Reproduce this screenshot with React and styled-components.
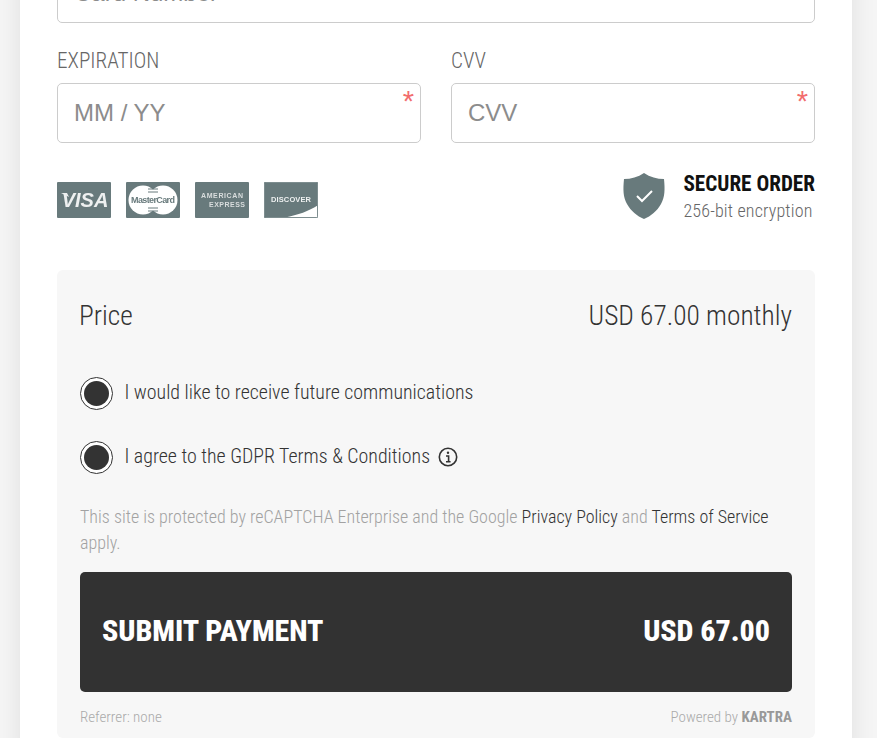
import React from "react";
import styled, { createGlobalStyle } from "styled-components";

const Global = createGlobalStyle`
  html, body { margin: 0; padding: 0; background: #f5f5f5; height: 738px; overflow: hidden; }
  * { box-sizing: border-box; }
`;
const Page = styled.div`
  width: 877px; height: 738px; overflow: hidden; padding: 0 25px 0 20px;
  font-family: Roboto, sans-serif; font-stretch: 75%;
`;
const Card = styled.main`
  width: 832px; height: 800px; background: #fff; padding: 0 37px;
  box-shadow: 0 0 24px rgba(0,0,0,.09);
`;
const TopInput = styled.div`
  height: 60px; margin-top: -37px; border: 1px solid #ccc; border-radius: 5px; padding: 0 16px;
  display: flex; align-items: center; color: #8c8c8c; font: 24px "Liberation Sans", sans-serif;
`;
const FieldRow = styled.div`
  display: grid; grid-template-columns: 364px 364px; column-gap: 30px; margin-top: 24px;
`;
const Label = styled.div`
  color: #666; font-size: 21.2px; font-weight: 350; line-height: 28px; height: 36px;
`;
const InputBox = styled.div`
  position: relative; height: 60px; border: 1px solid #ccc; border-radius: 5px; padding: 0 16px;
  display: flex; align-items: center; color: #8c8c8c; font: 24px "Liberation Sans", sans-serif;
`;
const Star = styled.span`
  position: absolute; right: 6px; top: 0; color: #f26d6d; font: 29px/34px "Liberation Sans", sans-serif;
`;
const TrustRow = styled.div`
  display: flex; justify-content: space-between; align-items: flex-start; margin-top: 39px; height: 88px;
`;
const Cards = styled.div`
  display: flex; gap: 15px;
`;
const PayCard = styled.svg`
  display: block; width: 54px; height: 36px; filter: blur(0.45px);
`;
const Secure = styled.div`
  display: flex; margin-top: -11px;
`;
const ShieldIcon = styled.svg`
  display: block; width: 42px; height: 46px; margin: 2px 18px 0 0;
`;
const SecureText = styled.div`
  display: flex; flex-direction: column;
`;
const SecureTitle = styled.div`
  font-size: 21.2px; line-height: 26px; font-weight: 700; color: #111;
`;
const SecureSub = styled.div`
  font-size: 18px; line-height: 27px; font-weight: 300; color: #666; letter-spacing: .16px;
`;
const Panel = styled.section`
  height: 468px; background: #f7f7f7; border-radius: 6px; padding: 0 23px;
`;
const PriceRow = styled.div`
  display: flex; justify-content: space-between; height: 91px; align-items: center; margin-bottom: 15px;
  font-size: 27.4px; font-weight: 350; color: #333;
  span:first-child { margin-left: -1px; }
`;
const Check = styled.div`
  display: flex; align-items: center; height: 34px; margin-bottom: 30px; color: #333; font-size: 19.9px; font-weight: 350;
`;
const Radio = styled.span`
  width: 33px; height: 33px; border-radius: 50%; border: 1.5px solid #333; background: #fff; margin-right: 11.5px;
  display: flex; align-items: center; justify-content: center; flex: none;
  &::after { content: ""; width: 25px; height: 25px; border-radius: 50%; background: #333; }
`;
const CheckText = styled.span`
  margin-top: -2px;
`;
const InfoIcon = styled.svg`
  display: block; width: 20px; height: 20px; margin-left: 8px;
`;
const Legal = styled.p`
  margin: 0; font-size: 17.98px; line-height: 26px; color: #a2a2a2; font-weight: 300;
  a { color: #333; text-decoration: none; }
`;
const Submit = styled.button`
  display: flex; width: 100%; height: 120px; margin-top: 16px; padding: 0 22px 4px; border: 0; border-radius: 5px;
  background: #323232; color: #fff; align-items: center; justify-content: space-between;
  font-family: inherit; font-stretch: 75%; font-size: 30px; font-weight: 800; letter-spacing: -.05px;
`;
const Footer = styled.div`
  display: flex; justify-content: space-between; align-items: center; height: 50px; font-size: 15px; font-weight: 300; color: #aaa;
  b { font-weight: 700; color: #999; }
`;

const Base = ({ children }) => (
  <PayCard viewBox="0 0 54 36"><rect width="54" height="36" rx="1" fill="#687a7c" />{children}</PayCard>
);

export default function App() {
  return (
    <Page>
      <Global />
      <Card>
        <TopInput>Card Number</TopInput>
        <FieldRow>
          <div>
            <Label>EXPIRATION</Label>
            <InputBox>MM / YY<Star>*</Star></InputBox>
          </div>
          <div>
            <Label>CVV</Label>
            <InputBox>CVV<Star>*</Star></InputBox>
          </div>
        </FieldRow>
        <TrustRow>
          <Cards>
            <Base>
              <path d="M4 11 H10 L12 15 Z" fill="#eef0f0" />
              <text x="28" y="25" textAnchor="middle" fontFamily="Liberation Sans" fontWeight="700" fontStyle="italic" fontSize="20" fill="#eef0f0">VISA</text>
            </Base>
            <Base>
              <circle cx="17" cy="18" r="14.5" fill="#fff" />
              <circle cx="37" cy="18" r="14.5" fill="#fff" />
              <path d="M22 7H32M22 10H32M22 26H32M22 29H32" stroke="#687a7c" strokeWidth="1" />
              <text x="27" y="21" textAnchor="middle" fontFamily="Liberation Sans" fontWeight="700" fontSize="9" fill="#687a7c" textLength="44">MasterCard</text>
            </Base>
            <Base>
              <text x="6" y="16" fontFamily="Liberation Sans" fontWeight="700" fontSize="7" fill="#d9dddd" textLength="42">AMERICAN</text>
              <text x="14" y="25" fontFamily="Liberation Sans" fontWeight="700" fontSize="7" fill="#d9dddd" textLength="36">EXPRESS</text>
            </Base>
            <Base>
              <path d="M21 35.5 C34 33 45 29 53.5 23.5 V35.5 Z" fill="#fff" />
              <rect x=".5" y=".5" width="53" height="35" rx="1" fill="none" stroke="#7d8d8f" />
              <text x="27" y="20" textAnchor="middle" fontFamily="Liberation Sans" fontWeight="700" fontSize="7.5" fill="#eef0f0" textLength="40">DISCOVER</text>
            </Base>
          </Cards>
          <Secure>
            <ShieldIcon viewBox="0 0 42 46">
              <path d="M21 0 C27 4 34 6 41 6 C42 16 42 24 38 31 C34 38 28 43 21 46 C14 43 8 38 4 31 C0 24 0 16 1 6 C8 6 15 4 21 0 Z" fill="#687a7c" />
              <path d="M14 23 L19 28 L29 18" fill="none" stroke="#fff" strokeWidth="2" />
            </ShieldIcon>
            <SecureText>
              <SecureTitle>SECURE ORDER</SecureTitle>
              <SecureSub>256-bit encryption</SecureSub>
            </SecureText>
          </Secure>
        </TrustRow>
        <Panel>
          <PriceRow><span>Price</span><span>USD 67.00 monthly</span></PriceRow>
          <Check><Radio /><CheckText>I would like to receive future communications</CheckText></Check>
          <Check>
            <Radio /><CheckText>I agree to the GDPR Terms &amp; Conditions</CheckText>
            <InfoIcon viewBox="0 0 20 20">
              <circle cx="10" cy="10" r="8.7" fill="none" stroke="#333" strokeWidth="1.6" />
              <circle cx="10" cy="5.8" r="1.2" fill="#333" />
              <path d="M8 9H10.6V14.6M8 14.8H12.6" fill="none" stroke="#333" strokeWidth="1.6" />
            </InfoIcon>
          </Check>
          <Legal>
            This site is protected by reCAPTCHA Enterprise and the Google <a>Privacy Policy</a> and <a>Terms of Service</a> apply.
          </Legal>
          <Submit><span>SUBMIT PAYMENT</span><span>USD 67.00</span></Submit>
          <Footer><span>Referrer: none</span><span>Powered by <b>KARTRA</b></span></Footer>
        </Panel>
      </Card>
    </Page>
  );
}
